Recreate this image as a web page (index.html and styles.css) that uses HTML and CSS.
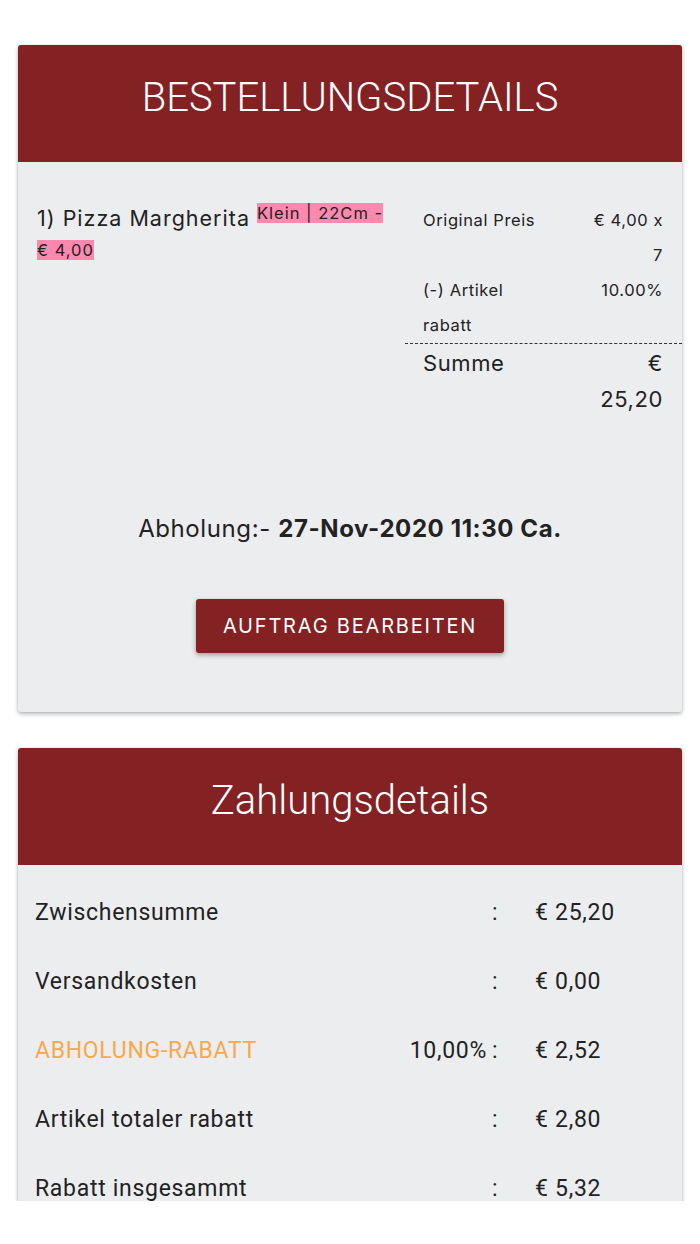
FILE: index.html
```html
<!DOCTYPE html>
<html lang="de">
<head>
<meta charset="utf-8">
<title>Bestellungsdetails</title>
<link rel="stylesheet" href="styles.css">
</head>
<body>
<div class="page">
  <section class="card">
    <header class="card-head">BESTELLUNGSDETAILS</header>
    <div class="card-body order">
      <div class="item">
        <p class="item-name">1) Pizza Margherita <span class="tag tag-top">Klein | 22Cm -</span> <span class="tag">€&nbsp;4,00</span></p>
        <div class="calc">
          <div class="calc-rows">
            <span class="lbl">Original Preis</span><span class="val">€ 4,00 x 7</span>
            <span class="lbl">(-) Artikel rabatt</span><span class="val">10.00%</span>
          </div>
          <div class="calc-rows sum">
            <span class="lbl">Summe</span><span class="val">€ 25,20</span>
          </div>
        </div>
      </div>
      <p class="pickup">Abholung:- <b>27-Nov-2020 11:30 Ca.</b></p>
      <div class="actions"><button class="btn">AUFTRAG BEARBEITEN</button></div>
    </div>
  </section>

  <section class="card">
    <header class="card-head">Zahlungsdetails</header>
    <div class="card-body pay">
      <div class="pay-row"><span class="p-lbl">Zwischensumme</span><span class="p-pct"></span><span class="p-col">:</span><span class="p-val">€ 25,20</span></div>
      <div class="pay-row"><span class="p-lbl">Versandkosten</span><span class="p-pct"></span><span class="p-col">:</span><span class="p-val">€ 0,00</span></div>
      <div class="pay-row"><span class="p-lbl accent">ABHOLUNG-RABATT</span><span class="p-pct">10,00%</span><span class="p-col">:</span><span class="p-val">€ 2,52</span></div>
      <div class="pay-row"><span class="p-lbl">Artikel totaler rabatt</span><span class="p-pct"></span><span class="p-col">:</span><span class="p-val">€ 2,80</span></div>
      <div class="pay-row"><span class="p-lbl">Rabatt insgesammt</span><span class="p-pct"></span><span class="p-col">:</span><span class="p-val">€ 5,32</span></div>
    </div>
  </section>
</div>
</body>
</html>
```

FILE: styles.css
```css
* { box-sizing: border-box; }
html, body { margin: 0; padding: 0; background: #ffffff; }
body { font-family: Inter, "Noto Sans", sans-serif; color: #222222; }

.page {
  height: 1201px;
  overflow: hidden;
  padding: 45px 18px 0;
}

.card {
  background: #ecedef;
  border-radius: 3px;
  box-shadow: 0 2px 4px rgba(0,0,0,0.28), 0 0 2px rgba(0,0,0,0.12);
  margin-bottom: 36px;
}

.card-head {
  height: 117px;
  padding-bottom: 12px;
  background: #842123;
  color: #ffffff;
  border-radius: 3px 3px 0 0;
  display: flex;
  align-items: center;
  justify-content: center;
  font-family: Roboto, sans-serif;
  font-weight: 300;
  font-size: 40px;
}

/* order card */
.order { padding: 41px 0 59px; }

.item { display: flex; align-items: flex-start; }

.item-name {
  flex: 1;
  margin: 0;
  padding-left: 19px;
  font-size: 21.5px;
  letter-spacing: 1px;
  line-height: 30px;
}
.tag {
  background: #ff88ae;
  font-size: 16.5px;
  letter-spacing: 1px;
  line-height: 21px;
}
.tag-top { vertical-align: top; }

.calc { width: 277px; }
.calc-rows {
  display: grid;
  grid-template-columns: 124px 74px;
  justify-content: space-between;
  padding: 0 19px 0 18px;
  font-size: 16.5px;
  letter-spacing: 0.6px;
  line-height: 35px;
}
.calc-rows .val { text-align: right; }
.calc-rows.sum {
  border-top: 1px dashed #333;
  font-size: 22px;
  line-height: 36px;
  padding-top: 1px;
}

.pickup {
  margin: 97px 0 0;
  text-align: center;
  font-size: 24px;
  letter-spacing: 0.6px;
  line-height: 30px;
}
.pickup b { font-weight: 700; }

.actions { display: flex; justify-content: center; margin-top: 55px; }
.btn {
  width: 308px;
  height: 54px;
  border: none;
  border-radius: 3px;
  background: #842123;
  color: #ffffff;
  font-family: Inter, "Noto Sans", sans-serif;
  font-size: 20px;
  letter-spacing: 1.8px;
  box-shadow: 0 2px 5px rgba(0,0,0,0.35);
}

/* payment card */
.pay { padding: 13px 19px 0 17px; }
.pay-row {
  display: grid;
  grid-template-columns: 1fr auto 45px 128px;
  align-items: center;
  height: 69px;
  font-family: Roboto, sans-serif;
  font-size: 23px;
  letter-spacing: 0.7px;
}
.p-pct { text-align: right; padding-right: 3px; }
.p-col { padding-left: 2px; }
.accent { color: #f7a84b; }
```
